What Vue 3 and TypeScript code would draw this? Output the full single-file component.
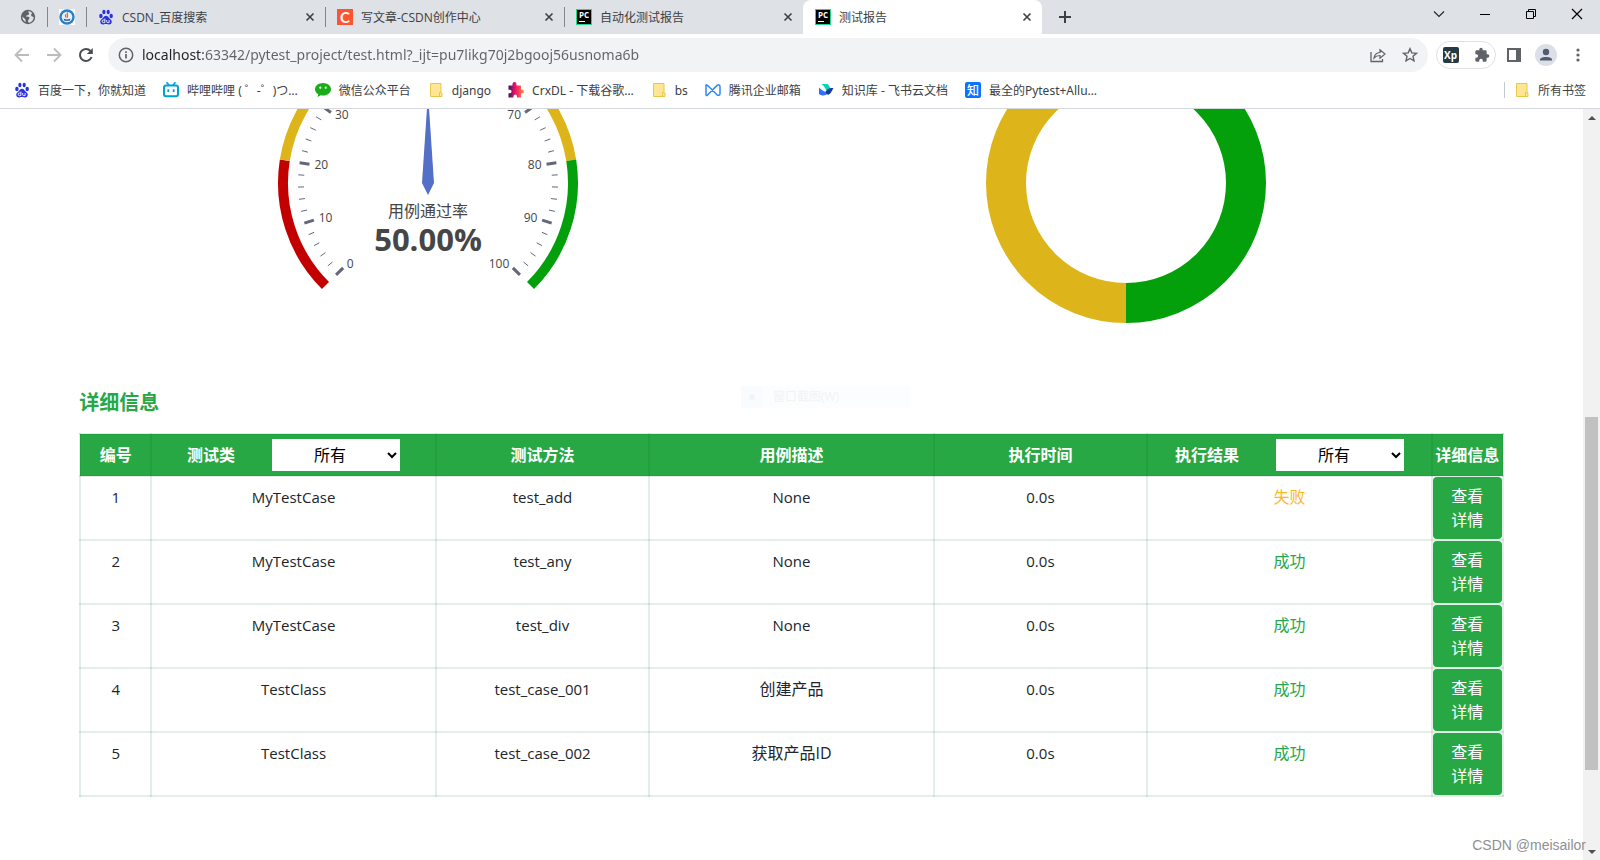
<script setup lang="ts">
import { ref } from 'vue'

type Row = { id: number; cls: string; method: string; desc: string; time: string; ok: boolean }

/* Site icons that are a plain letter mark on a tile. */
const marks: Record<string, string> = { csdn: 'C', pycharm: 'PC', zhi: '知' }

const tabs = [
  { title: 'CSDN_百度搜索', icon: 'baidu', active: false },
  { title: '写文章-CSDN创作中心', icon: 'csdn', active: false },
  { title: '自动化测试报告', icon: 'pycharm', active: false },
  { title: '测试报告', icon: 'pycharm', active: true },
]

const bookmarks = [
  { title: '百度一下，你就知道', icon: 'baidu' },
  { title: '哔哩哔哩 ( ゜-゜)つ…', icon: 'bili' },
  { title: '微信公众平台', icon: 'wechat' },
  { title: 'django', icon: 'folder' },
  { title: 'CrxDL - 下载谷歌…', icon: 'crx' },
  { title: 'bs', icon: 'folder' },
  { title: '腾讯企业邮箱', icon: 'mail' },
  { title: '知识库 - 飞书云文档', icon: 'feishu' },
  { title: '最全的Pytest+Allu…', icon: 'zhi' },
]

const rows: Row[] = [
  { id: 1, cls: 'MyTestCase', method: 'test_add', desc: 'None', time: '0.0s', ok: false },
  { id: 2, cls: 'MyTestCase', method: 'test_any', desc: 'None', time: '0.0s', ok: true },
  { id: 3, cls: 'MyTestCase', method: 'test_div', desc: 'None', time: '0.0s', ok: true },
  { id: 4, cls: 'TestClass', method: 'test_case_001', desc: '创建产品', time: '0.0s', ok: true },
  { id: 5, cls: 'TestClass', method: 'test_case_002', desc: '获取产品ID', time: '0.0s', ok: true },
]

const url = ref('localhost:63342/pytest_project/test.html?_ijt=pu7likg70j2bgooj56usnoma6b')
const classFilter = ref('all')
const resultFilter = ref('all')
const scroll = { top: 40.6, size: 49.2 }

/* Gauge geometry: 0 sits at 225°, 100 at -45°. */
const polar = (value: number, r: number) => {
  const a = ((225 - value * 2.7) * Math.PI) / 180
  return { x: r * Math.cos(a), y: -r * Math.sin(a) }
}
const arc = (from: number, to: number, r: number) => {
  const a = polar(from, r)
  const b = polar(to, r)
  return `M${a.x} ${a.y}A${r} ${r} 0 ${to - from > 66 ? 1 : 0} 1 ${b.x} ${b.y}`
}
const bands = [
  { d: arc(0, 20, 145), color: '#c20000' },
  { d: arc(20, 80, 145), color: '#ddb41a' },
  { d: arc(80, 100, 145), color: '#03a00c' },
]
const ticks = Array.from({ length: 51 }, (_, i) => {
  const major = i % 5 === 0
  const a = polar(i * 2, 130)
  const b = polar(i * 2, major ? 120 : 124)
  return { a, b, w: major ? 3 : 1 }
})
/* Only the lower part of the dial is scrolled into view. */
const labels = [0, 10, 20, 30, 70, 80, 90, 100].map((v) => {
  const p = polar(v, 115)
  return { text: String(v), x: p.x, y: Math.floor(p.y + 4), anchor: v < 50 ? 'start' : 'end' }
})
</script>

<template>
  <div class="browser">
    <svg class="defs" aria-hidden="true">
      <symbol id="i-baidu" viewBox="0 0 16 16">
        <g fill="#2932e1">
          <ellipse cx="2.9" cy="7" rx="1.7" ry="2.2" />
          <ellipse cx="5.9" cy="3" rx="1.6" ry="2.3" />
          <ellipse cx="10.2" cy="3" rx="1.6" ry="2.3" />
          <ellipse cx="13.2" cy="7" rx="1.7" ry="2.2" />
          <path d="M8 6.8c1.8 0 2.4 1.7 3.8 2.9 1.300 1.100 2.200 2 1.900 3.600-.3 1.700-1.700 2.300-3.200 2.100-1-.1-1.600-.3-2.500-.3s-1.500.2-2.500.3c-1.500.2-2.900-.4-3.200-2.100-.3-1.600.6-2.500 1.900-3.600C5.600 8.500 6.200 6.800 8 6.800z" />
        </g>
        <path d="M6.900 9.600v4h-1.500a1.300 1.300 0 0 1 0-2.600h1.400M8.700 11v1.700q0 .9.900.9h1.500V11" fill="none" stroke="#fff" stroke-width=".9" />
      </symbol>
      <symbol id="i-bili" viewBox="0 0 16 16">
        <path d="M4 .8l2 2.400M12 .8l-2 2.400" stroke="#00a1d6" stroke-width="1.700" stroke-linecap="round" />
        <rect x="1" y="3.600" width="14" height="10.600" rx="2" fill="none" stroke="#00a1d6" stroke-width="2" />
        <path d="M5.300 7.300v2.600M10.700 7.300v2.600" stroke="#00a1d6" stroke-width="1.800" />
      </symbol>
      <symbol id="i-wechat" viewBox="0 0 16 16">
        <path d="M8 1c4.500 0 8 2.800 8 6.300s-3.500 6.300-8 6.300c-.8 0-1.600-.1-2.300-.3L2.600 15l.6-2.800C1.200 11 0 9.300 0 7.300 0 3.800 3.500 1 8 1z" fill="#1aad19" />
        <circle cx="5.300" cy="5.700" r="1.100" fill="#fff" />
        <circle cx="10.700" cy="5.700" r="1.100" fill="#fff" />
      </symbol>
      <symbol id="i-folder" viewBox="0 0 16 16">
        <path d="M2.500 1.500h10.500v9.500h1v3.500H2.500z" fill="#ffe694" stroke="#e8c84a" />
        <path d="M11.500 14v-3.500h1.500" fill="none" stroke="#e8c84a" />
      </symbol>
      <symbol id="i-crx" viewBox="0 0 16 16">
        <linearGradient id="crx-g"><stop offset="0" stop-color="#33175e" /><stop offset=".4" stop-color="#e8106c" /><stop offset=".65" stop-color="#f9385f" /><stop offset="1" stop-color="#fba13c" /></linearGradient>
        <path d="M.5 3.500h4V2a2 2 0 0 1 4 0v1.500h4.500v4h1a2 2 0 0 1 0 4h-1V15.500H9v-1.300a1.700 1.700 0 0 0-3.500 0v1.300h-5v-4.300h1.300a1.700 1.700 0 0 0 0-3.500H.5z" fill="url(#crx-g)" />
      </symbol>
      <symbol id="i-mail" viewBox="0 0 16 16">
        <path d="M1 3.200v9.600c0 .8.700 1 1.300.4l9.700-9.800c1.200-1 3-.6 3 1v7.400c0 1.600-1.800 2-3 1L5 5.800C3 3.500 1 2.200 1 3.200z" fill="none" stroke="#2f88ff" stroke-width="1.500" />
      </symbol>
      <symbol id="i-feishu" viewBox="0 0 16 16">
        <path d="M3.500 2h6c1.500 1.200 2.300 2.700 2.700 4.500L8.500 9C7.500 6 6 4 3.500 2z" fill="#00d6b9" />
        <path d="M1 5.500c3 3 6.500 5 9.500 4.800-2 3.800-6.500 4.200-9.500 1.800z" fill="#3370ff" />
        <path d="M7.500 9.700c2-3 4.500-4.500 8-3.500-1.700 2-2 5-5 6.500-1.500-.2-2.500-1.500-3-3z" fill="#133c9a" />
      </symbol>
      <symbol id="i-puzzle" viewBox="0 0 24 24">
        <path d="M20.500 11H19V7c0-1.100-.9-2-2-2h-4V3.500a2.500 2.500 0 0 0-5 0V5H4c-1.100 0-2 .9-2 2v3.800h1.500a2.700 2.700 0 0 1 0 5.400H2V20c0 1.100.9 2 2 2h3.800v-1.500a2.700 2.700 0 0 1 5.400 0V22H17c1.100 0 2-.9 2-2v-4h1.500a2.500 2.500 0 0 0 0-5z" fill="#5f6368" />
      </symbol>
    </svg>

    <header class="tabstrip">
      <button class="pinned" aria-label="Pinned tab">
        <svg width="16" height="16" viewBox="0 0 16 16"><circle cx="8" cy="8" r="7.200" fill="#5f6368" /><path d="M8.500 2c-1 1.500 1.500 1.700.5 3.200C8 6.500 6 6 6 7.600c1.500.5 3-.3 3.500 1.200.3 1.300-1.500 1.700-1.500 3.200 0 1 .5 1.700 1.200 1.700 2.600-.6 4.500-3 4.500-5.700L11.500 7.300 11 5.500l1.300-1.300A6 6 0 0 0 8.500 2zM2.300 7.500l3 2.700.5 2.800C3.700 12.300 2.200 10 2.300 7.500z" fill="#dee1e6" /></svg>
      </button>
      <span class="sep"></span>
      <button class="pinned second" aria-label="Pinned tab">
        <svg width="16" height="16" viewBox="0 0 16 16"><path d="M0 0h16v16H0z" fill="#fff" /><circle cx="8" cy="8" r="6.500" fill="#e8f2fa" stroke="#2a80c8" stroke-width="2.400" /><path d="M4.500 9.500c2 1.200 5 1.200 7 0l-1 2.300h-5z" fill="#1d4f91" /><path d="M8.700 3.500C7 5.500 9.800 6 8 8.800M6.800 5.500c-1 1.300.4 1.800-.3 3" fill="none" stroke="#e06a2b" stroke-width="1.300" /></svg>
      </button>
      <div v-for="(t, i) in tabs" :key="i" class="tab" :class="{ active: t.active }">
        <button class="tab-title">
          <i v-if="marks[t.icon]" class="mark" :class="t.icon" aria-hidden="true">{{ marks[t.icon] }}</i>
          <svg v-else width="16" height="16"><use :href="'#i-' + t.icon" /></svg>
          <span class="cap">{{ t.title }}</span>
        </button>
        <button class="tab-close" aria-label="关闭"><svg width="10" height="10" viewBox="0 0 10 10"><path d="M1.500 1.500l7 7M8.500 1.500l-7 7" stroke="#3c4043" stroke-width="1.600" /></svg></button>
      </div>
      <button class="newtab" aria-label="新标签页"><svg width="12" height="12" viewBox="0 0 12 12"><path d="M6 0v12M0 6h12" stroke="#3c4043" stroke-width="2" /></svg></button>
      <div class="winctl">
        <button aria-label="搜索标签页"><svg width="12" height="12" viewBox="0 0 12 12"><path d="M1 3.500l5 5 5-5" fill="none" stroke="#222" stroke-width="1.100" /></svg></button>
        <button aria-label="最小化"><svg width="12" height="12" viewBox="0 0 12 12"><path d="M1 6.500h10" stroke="#000" /></svg></button>
        <button aria-label="还原"><svg width="12" height="12" viewBox="0 0 12 12"><path d="M1.500 3.500h7v7h-7zM3.500 3.500v-2h7v7h-2" fill="none" stroke="#000" /></svg></button>
        <button aria-label="关闭窗口"><svg width="12" height="12" viewBox="0 0 12 12"><path d="M1 1l10 10M11 1L1 11" stroke="#000" stroke-width="1.200" /></svg></button>
      </div>
    </header>

    <nav class="toolbar">
      <button class="nav" aria-label="后退"><svg width="16" height="16" viewBox="0 0 16 16"><path d="M15 8H2M8 1.500L1.500 8 8 14.500" fill="none" stroke="#babcbe" stroke-width="1.800" /></svg></button>
      <button class="nav" aria-label="前进"><svg width="16" height="16" viewBox="0 0 16 16"><path d="M1 8h13M8 1.500L14.500 8 8 14.500" fill="none" stroke="#babcbe" stroke-width="1.800" /></svg></button>
      <button class="nav" aria-label="重新加载"><svg width="16" height="16" viewBox="0 0 16 16"><path d="M13.600 10A6 6 0 1 1 12.500 4" fill="none" stroke="#4a4e52" stroke-width="2" /><path d="M14.800 1v6h-6z" fill="#4a4e52" /></svg></button>
      <div class="omnibox">
        <svg width="16" height="16" viewBox="0 0 16 16"><circle cx="8" cy="8" r="6.700" fill="none" stroke="#5f6368" stroke-width="1.500" /><path d="M8 7v4.500M8 4.200v1.700" stroke="#5f6368" stroke-width="1.700" /></svg>
        <input v-model="url" class="url" type="text" aria-label="地址栏" spellcheck="false" />
        <button class="nav" aria-label="分享"><svg width="16" height="16" viewBox="0 0 16 16"><path d="M1 5v9.500h11.500V12" fill="none" stroke="#5f6368" stroke-width="1.300" /><path d="M4 11c.5-3.500 2.500-5.300 6-5.500V2.800L15 7l-5 4.200V8.500C7.500 8.500 5.500 9.200 4 11z" fill="none" stroke="#5f6368" stroke-width="1.200" /></svg></button>
        <button class="nav" aria-label="收藏"><svg width="16" height="16" viewBox="0 0 16 16"><path d="M8 1.700l1.800 4.200 4.700.4-3.500 3 1 4.600L8 11.500l-4 2.400 1-4.600-3.500-3 4.700-.4z" fill="none" stroke="#5f6368" stroke-width="1.400" /></svg></button>
      </div>
      <div class="extensions">
        <button class="nav" aria-label="XPath Helper"><span class="xp">Xp</span></button>
        <button class="nav" aria-label="扩展程序"><svg width="16" height="16"><use href="#i-puzzle" /></svg></button>
      </div>
      <button class="nav" aria-label="侧边栏"><svg width="14" height="14" viewBox="0 0 14 14"><path d="M1 1h12v12H1z" fill="none" stroke="#5f6368" stroke-width="2" /><path d="M9 1h4v12H9z" fill="#5f6368" /></svg></button>
      <button class="nav" aria-label="用户"><svg width="22" height="22" viewBox="0 0 22 22"><circle cx="11" cy="11" r="11" fill="#dcdfe6" /><circle cx="11" cy="8" r="3.200" fill="#525b73" /><path d="M5 16.500v-1c0-3.500 12-3.500 12 0v1z" fill="#525b73" /></svg></button>
      <button class="nav" aria-label="菜单"><svg width="4" height="16" viewBox="0 0 4 16"><g fill="#5f6368"><circle cx="2" cy="3" r="1.600" /><circle cx="2" cy="8" r="1.600" /><circle cx="2" cy="13" r="1.600" /></g></svg></button>
    </nav>

    <nav class="bookmarks">
      <a v-for="b in bookmarks" :key="b.title" href="#">
        <i v-if="marks[b.icon]" class="mark" :class="b.icon" aria-hidden="true">{{ marks[b.icon] }}</i>
        <svg v-else width="16" height="16"><use :href="'#i-' + b.icon" /></svg>
        <span class="cap">{{ b.title }}</span>
      </a>
      <span class="bsep"></span>
      <a href="#"><svg width="16" height="16"><use href="#i-folder" /></svg><span class="cap">所有书签</span></a>
    </nav>

    <div class="viewport">
      <main>
        <div class="report">
          <section class="charts">
            <svg width="320" height="220" viewBox="-160 -74 320 220" role="img" aria-label="用例通过率 50.00%">
              <path v-for="b in bands" :key="b.color" :d="b.d" fill="none" :stroke="b.color" stroke-width="10" />
              <line v-for="(t, i) in ticks" :key="i" :x1="t.a.x" :y1="t.a.y" :x2="t.b.x" :y2="t.b.y" stroke="#63677a" :stroke-width="t.w" />
              <text v-for="l in labels" :key="l.text" :x="l.x" :y="l.y" :text-anchor="l.anchor" class="tick">{{ l.text }}</text>
              <path d="M0-90L6 0 0 12-6 0z" fill="#5470c6" />
              <text x="0" y="34" text-anchor="middle" class="gauge-name">用例通过率</text>
              <text x="0" y="68" text-anchor="middle" class="gauge-value">50.00%</text>
            </svg>
            <svg width="320" height="220" viewBox="-160 -74 320 220" role="img" aria-label="成功 失败">
              <path d="M0-120a120 120 0 0 1 0 240" fill="none" stroke="#03a00c" stroke-width="40" />
              <path d="M0 120a120 120 0 0 1 0-240" fill="none" stroke="#ddb41a" stroke-width="40" />
            </svg>
          </section>

          <h2>详细信息</h2>
          <table>
            <colgroup><col class="w5" /><col class="w20" /><col class="w15" /><col class="w20" /><col class="w15" /><col class="w20" /><col class="w5" /></colgroup>
            <thead>
              <tr>
                <th>编号</th>
                <th>
                  <div class="filter">
                    <label for="f-class">测试类</label>
                    <select id="f-class" v-model="classFilter">
                      <option value="all">所有</option>
                      <option>MyTestCase</option>
                      <option>TestClass</option>
                    </select>
                  </div>
                </th>
                <th>测试方法</th>
                <th>用例描述</th>
                <th>执行时间</th>
                <th>
                  <div class="filter">
                    <label for="f-result">执行结果</label>
                    <select id="f-result" v-model="resultFilter">
                      <option value="all">所有</option>
                      <option>成功</option>
                      <option>失败</option>
                    </select>
                  </div>
                </th>
                <th>详细信息</th>
              </tr>
            </thead>
            <tbody>
              <tr v-for="r in rows" :key="r.id">
                <td class="latin">{{ r.id }}</td>
                <td class="latin">{{ r.cls }}</td>
                <td class="latin">{{ r.method }}</td>
                <td :class="{ latin: r.desc === 'None' }">{{ r.desc }}</td>
                <td class="latin">{{ r.time }}</td>
                <td :class="r.ok ? 'ok' : 'fail'">{{ r.ok ? '成功' : '失败' }}</td>
                <td class="action"><button>查看详情</button></td>
              </tr>
            </tbody>
          </table>
        </div>
        <div class="ghost"><i></i><span>窗口截图(W)</span></div>
      </main>
      <div class="scrollbar">
        <button aria-label="向上滚动"><svg width="8" height="4" viewBox="0 0 8 4"><path d="M0 4l4-4 4 4z" fill="#505050" /></svg></button>
        <div class="track"><div class="thumb" :style="{ top: scroll.top + '%', height: scroll.size + '%' }"></div></div>
        <button aria-label="向下滚动"><svg width="8" height="4" viewBox="0 0 8 4"><path d="M0 0l4 4 4-4z" fill="#505050" /></svg></button>
      </div>
      <span class="watermark">CSDN @meisailor</span>
    </div>
  </div>
</template>

<style>
body {
  margin: 0;
  overflow: hidden;
}
</style>

<style scoped>
.browser {
  display: flex;
  flex-direction: column;
  height: 100vh;
  background: #fff;
  color: #212529;
  font: 16px/24px "Open Sans", "Noto Sans CJK SC", sans-serif;
}
* {
  box-sizing: border-box;
}
.defs {
  position: absolute;
  width: 0;
  height: 0;
}
svg {
  flex: none;
  display: block;
}
button {
  font: inherit;
  color: inherit;
  border: 0;
  padding: 0;
  background: none;
}
.cap {
  padding-top: 2px;
}
.mark {
  flex: none;
  width: 16px;
  height: 16px;
  color: #fff;
  font-style: normal;
  text-align: center;
}
.mark.csdn {
  background: #fc5531;
  font: bold 15px/16px Lato, sans-serif;
}
.mark.pycharm {
  border: 1px solid #21d789;
  background: linear-gradient(#fff, #fff) 2px 11px / 6px 1px no-repeat #000;
  font: bold 8px/10px "Open Sans", sans-serif;
}
.mark.zhi {
  border-radius: 2px;
  background: #0a74ff;
  font: 500 12px/16px "Noto Sans CJK SC", sans-serif;
}

.tabstrip {
  display: flex;
  align-items: center;
  height: 34px;
  background: #dee1e6;
  font-size: 12px;
  line-height: 16px;
  color: #3c4043;
}
.pinned {
  width: 47px;
  padding-left: 20px;
}
.pinned.second {
  width: 38px;
  padding-left: 11px;
}
.sep {
  width: 1px;
  height: 20px;
  background: #80868b;
}
.tab {
  position: relative;
  display: flex;
  align-items: center;
  flex: 0 1 239px;
  min-width: 0;
  height: 34px;
  padding: 0 10px 0 12px;
}
.tab::before {
  content: "";
  position: absolute;
  left: 0;
  top: 7px;
  width: 1px;
  height: 20px;
  background: #80868b;
}
.tab.active {
  background: #fff;
  border-radius: 8px 8px 0 0;
}
.tab.active::before {
  display: none;
}
.tab-title {
  display: flex;
  align-items: center;
  gap: 8px;
  flex: 1;
  min-width: 0;
  white-space: nowrap;
}
.tab-close {
  display: grid;
  place-items: center;
  width: 10px;
  height: 16px;
}
.newtab {
  margin-left: 17px;
}
.winctl {
  display: flex;
  align-self: flex-start;
  margin-left: auto;
}
.winctl button {
  display: grid;
  place-items: center;
  width: 46px;
  height: 28px;
}

.toolbar {
  display: flex;
  align-items: center;
  height: 42px;
  padding: 0 6px;
}
.nav {
  display: grid;
  place-items: center;
  flex: none;
  width: 32px;
  height: 28px;
}
.omnibox {
  display: flex;
  align-items: center;
  flex: 1;
  min-width: 0;
  height: 34px;
  margin: 0 8px 0 6px;
  padding: 0 2px 0 10px;
  border-radius: 17px;
  background: #f1f3f4;
}
.url {
  flex: 1;
  min-width: 0;
  margin-left: 8px;
  padding: 0;
  border: 0;
  outline: 0;
  font: 14px/20px "Noto Sans", "Noto Sans CJK SC", sans-serif;
  background: linear-gradient(90deg, #202124 61px, #5f6368 61px);
  -webkit-background-clip: text;
  background-clip: text;
  color: transparent;
}
.extensions {
  display: flex;
  justify-content: space-between;
  align-items: center;
  width: 60px;
  height: 28px;
  margin-right: 2px;
  border: 1px solid #dfe1e5;
  border-radius: 14px;
}
.extensions .nav {
  width: 27px;
}
.xp {
  width: 16px;
  height: 16px;
  border-radius: 2px;
  background: #263a44;
  color: #fff;
  font: bold 10px/16px "Open Sans", sans-serif;
  text-align: center;
}

.bookmarks {
  display: flex;
  align-items: center;
  gap: 17px;
  height: 33px;
  padding: 0 14px;
  padding-bottom: 4px;
  border-bottom: 1px solid #d5d8dc;
  font: 12px/16px "Noto Sans", "Noto Sans CJK SC", sans-serif;
}
.bookmarks a {
  display: flex;
  align-items: center;
  gap: 8px;
  color: #3c4043;
  text-decoration: none;
  white-space: nowrap;
}
.bsep {
  width: 1px;
  height: 16px;
  margin: 0 -8px 0 auto;
  background: #c6c9cd;
}

.viewport {
  position: relative;
  display: flex;
  flex: 1;
  min-height: 0;
}
main {
  position: relative;
  flex: 1;
  min-width: 0;
  overflow: hidden;
}
.report {
  width: 90%;
  margin: 0 auto;
}
.charts {
  display: grid;
  grid-template-columns: 49% 49%;
  justify-items: center;
  margin-bottom: 59px;
}
.tick {
  font-size: 12px;
  fill: #464646;
}
.gauge-name {
  font-size: 16px;
  fill: #464646;
}
.gauge-value {
  font-size: 31px;
  font-weight: 700;
  fill: #464646;
}
h2 {
  margin: 0 0 15px;
  font-size: 20px;
  line-height: 30px;
  font-weight: 700;
  color: #28a745;
}
table {
  width: 100%;
  table-layout: fixed;
  border-collapse: collapse;
  text-align: center;
}
.w5 {
  width: 5%;
}
.w15 {
  width: 15%;
}
.w20 {
  width: 20%;
}
th,
td {
  border: 2px solid rgba(0, 99, 50, 0.11);
}
th {
  padding: 4px 0;
  background: #28a745;
  color: #fff;
  white-space: nowrap;
}
td {
  padding: 8px 0;
  vertical-align: top;
}
.latin {
  font-size: 15px;
}
.filter {
  display: flex;
  justify-content: center;
  align-items: center;
  gap: 37px;
}
select {
  width: 128px;
  height: 32px;
  border: 0;
  border-radius: 0;
  background-color: #fff;
  color: #000;
  font: 16px/24px "Open Sans", "Noto Sans CJK SC", sans-serif;
  text-align: center;
}
.ok {
  color: #28a745;
}
.fail {
  color: #ffb720;
}
.action {
  padding: 0;
}
.action button {
  display: block;
  width: 100%;
  padding: 7px 13px;
  border-radius: 4px;
  background: #28a745;
  color: #fff;
}
.ghost {
  position: absolute;
  left: 741px;
  top: 277px;
  display: flex;
  align-items: center;
  width: 170px;
  height: 22px;
  background: #fcfdff;
  color: #f3f3f3;
  font-size: 12px;
  line-height: 22px;
}
.ghost i {
  display: grid;
  place-items: center;
  width: 22px;
  height: 22px;
  margin-right: 10px;
  background: #f8fcff;
}
.ghost i::before {
  content: "";
  width: 6px;
  height: 6px;
  border-radius: 3px;
  background: #f3f3f3;
}

.scrollbar {
  display: flex;
  flex-direction: column;
  width: 17px;
  background: #f1f1f1;
}
.scrollbar button {
  display: grid;
  place-items: center;
  height: 17px;
}
.track {
  position: relative;
  flex: 1;
}
.thumb {
  position: absolute;
  left: 2px;
  right: 2px;
  background: #c1c1c1;
}
.watermark {
  position: absolute;
  right: 14px;
  bottom: 5px;
  font: 14px/20px "Liberation Sans", sans-serif;
  color: #8f8f8f;
}
</style>
